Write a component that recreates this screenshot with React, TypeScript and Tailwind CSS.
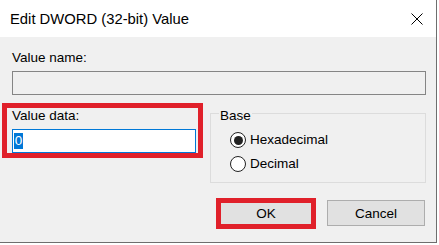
import React from 'react';

const font = { fontFamily: '"Liberation Sans", Arial, sans-serif' };

function Radio({ label, checked }: { label: string; checked?: boolean }) {
  return (
    <div className="flex items-center">
      <span className="w-[16px] h-[16px] rounded-full border border-[#222222] bg-white flex items-center justify-center">
        {checked && <span className="w-[9px] h-[9px] rounded-full bg-[#222222]" />}
      </span>
      <span className="ml-[4px] leading-[16px]">{label}</span>
    </div>
  );
}

export default function App() {
  return (
    <div className="w-[439px] h-[245px] bg-white text-black text-[13.5px]" style={font}>
      <div className="w-[437px] h-[243px] flex flex-col border-r border-b border-[#6e6e6e]">
        {/* Title bar */}
        <div className="h-[37px] bg-white flex items-center justify-between pl-[10px] pr-[13px]">
          <span className="text-[14.8px] leading-[16px]">Edit DWORD (32-bit) Value</span>
          <svg width="12" height="12" viewBox="0 0 12 12" aria-label="Close">
            <path d="M0.5 0.5 L11.5 11.5 M11.5 0.5 L0.5 11.5" stroke="#000" strokeWidth="1" fill="none" />
          </svg>
        </div>

        {/* Body */}
        <div className="flex-1 bg-[#f0f0f0] flex flex-col">
          <div className="mt-[13px] ml-[12px] leading-[15px]">Value name:</div>
          <div className="mt-[6px] ml-[12px] w-[414px] h-[24px] border border-[#858585] bg-[#f0f0f0]" />

          <div className="mt-[8px] flex items-start">
            <div className="ml-[2px] w-[201px] h-[55px] border-[5px] border-[#e0202a] flex flex-col">
              <div className="ml-[5px] leading-[15px]">Value data:</div>
              <div className="mt-[6px] ml-[5px] w-[184px] h-[24px] border border-[#0078d7] bg-white flex items-center pl-[1px]">
                <span className="w-[9px] h-[16px] bg-[#0078d7] text-white text-center leading-[16px]">0</span>
              </div>
            </div>

            <div className="relative ml-[7px] mt-[10px] w-[216px] h-[70px] border border-[#dcdcdc] flex flex-col pl-[19px] pt-[18px] gap-[8px]">
              <span className="absolute top-[-6px] left-[8px] px-[1px] bg-[#f0f0f0] leading-[15px]">Base</span>
              <Radio label="Hexadecimal" checked />
              <Radio label="Decimal" />
            </div>
          </div>

          <div className="mt-[15px] ml-[216px] flex items-start">
            <button className="w-[100px] h-[31px] border-[5px] border-[#e0202a] bg-[#e1e1e1] flex items-center justify-center leading-[15px]">
              OK
            </button>
            <button className="ml-[11px] mt-[2px] w-[98px] h-[26px] border border-[#adadad] bg-[#e1e1e1] flex items-center justify-center leading-[15px]">
              Cancel
            </button>
          </div>
        </div>
      </div>
    </div>
  );
}
